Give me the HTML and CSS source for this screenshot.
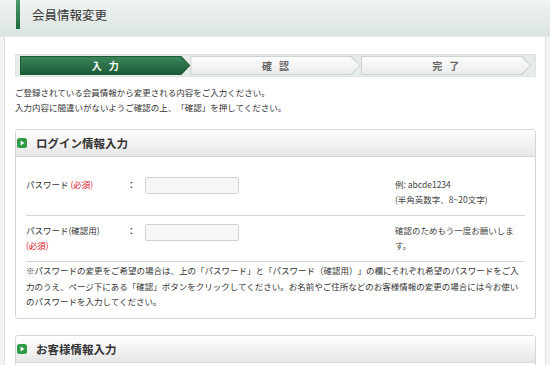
FILE: index.html
```html
<!DOCTYPE html>
<html lang="ja">
<head>
<meta charset="utf-8">
<title>会員情報変更</title>
<link rel="stylesheet" href="styles.css">
</head>
<body>
<header class="head">
  <span class="head-bar"></span>
  <h1 class="head-title">会員情報変更</h1>
</header>
<div class="page">
  <ol class="steps">
    <li class="step step-active"><span class="step-label">入力</span></li>
    <li class="step"><span class="step-label">確認</span></li>
    <li class="step"><span class="step-label">完了</span></li>
  </ol>
  <p class="intro">ご登録されている会員情報から変更される内容をご入力ください。<br>入力内容に間違いがないようご確認の上、「確認」を押してください。</p>

  <section class="box">
    <h2 class="box-head">
      <svg class="box-icon" viewBox="0 0 10 10" width="10" height="10"><rect x="0" y="0" width="10" height="10" rx="2.5" fill="#2f9a45"/><path d="M3.6 2.4 L7.4 5 L3.6 7.6 Z" fill="#fff"/></svg>
      ログイン情報入力
    </h2>
    <div class="row row-first">
      <div class="label">パスワード <span class="req">(必須)</span></div>
      <div class="colon">：</div>
      <div class="field"><span class="input"></span></div>
      <div class="note">例: abcde1234<br>(半角英数字、8~20文字)</div>
    </div>
    <div class="row row-second">
      <div class="label">パスワード(確認用)<br><span class="req">(必須)</span></div>
      <div class="colon">：</div>
      <div class="field"><span class="input input-second"></span></div>
      <div class="note">確認のためもう一度お願いします。</div>
    </div>
    <p class="box-note">※パスワードの変更をご希望の場合は、上の「パスワード」と「パスワード（確認用）」の欄にそれぞれ希望のパスワードをご入力のうえ、ページ下にある「確認」ボタンをクリックしてください。お名前やご住所などのお客様情報の変更の場合には今お使いのパスワードを入力してください。</p>
  </section>

  <section class="box">
    <h2 class="box-head">
      <svg class="box-icon" viewBox="0 0 10 10" width="10" height="10"><rect x="0" y="0" width="10" height="10" rx="2.5" fill="#2f9a45"/><path d="M3.6 2.4 L7.4 5 L3.6 7.6 Z" fill="#fff"/></svg>
      お客様情報入力
    </h2>
    <div class="box-body"></div>
  </section>
</div>
</body>
</html>
```

FILE: styles.css
```css
html, body {
  margin: 0;
  padding: 0;
}
body {
  background: #f3f4f4;
  font-family: "Noto Sans CJK JP", "Liberation Sans", sans-serif;
  color: #333;
  font-size: 8.5px;
  overflow: hidden;
  text-spacing-trim: space-all;
}
.head {
  height: 37px;
  background: linear-gradient(#f1f5f3, #dae3df);
  display: flex;
  align-items: flex-start;
  border-bottom: 1px solid #e6ebe9;
  box-sizing: border-box;
}
.head-bar {
  width: 4px;
  height: 29px;
  margin-left: 16px;
  background: linear-gradient(#4a9a68, #1f6a3f);
}
.head-title {
  margin: 0 0 0 12px;
  font-size: 12.5px;
  font-weight: normal;
  line-height: 30px;
  color: #333;
}
.page {
  margin: 0 4px;
  background: #fff;
  border-left: 1px solid #dcdcdc;
  border-right: 1px solid #dcdcdc;
  padding: 17px 9px 0 10px;
  min-height: 400px;
}
.steps {
  list-style: none;
  margin: 0;
  padding: 1px 4px;
  display: flex;
  height: 19px;
  background: #e6ede9;
  border: 1px solid #dde5e1;
}
.step {
  flex: 1;
  position: relative;
  display: flex;
  align-items: center;
  justify-content: center;
}
.step::before,
.step::after {
  content: "";
  position: absolute;
  clip-path: polygon(0 0, calc(100% - 9px) 0, 100% 50%, calc(100% - 9px) 100%, 0 100%);
}
.step::before {
  inset: 0;
  background: #cdd3d0;
}
.step::after {
  inset: 1px 1px 1px 1px;
  background: linear-gradient(#fdfdfd, #ececec);
}
.step-active::before {
  background: #1c5a36;
}
.step-active::after {
  background: linear-gradient(#3b8659, #1d5b37);
}
.step-label {
  position: relative;
  z-index: 1;
  font-size: 10px;
  font-weight: bold;
  letter-spacing: 7px;
  margin-right: -7px;
  color: #666;
}
.step-active .step-label {
  color: #fff;
}
.intro {
  margin: 8px 0 0;
  line-height: 15px;
  color: #333;
}
.box {
  margin-top: 14px;
  border: 1px solid #d6d6d6;
  border-radius: 3px;
  background: #fff;
}
.box + .box {
  margin-top: 16px;
}
.box-head {
  margin: 0;
  height: 26px;
  display: flex;
  align-items: center;
  gap: 9px;
  padding-left: 1px;
  font-size: 11.5px;
  font-weight: bold;
  color: #333;
  background: linear-gradient(#ffffff, #e6e6e6);
  border-bottom: 1px solid #d6d6d6;
  border-radius: 3px 3px 0 0;
}
.box-icon {
  flex: none;
}
.row {
  margin: 0 10px;
  display: grid;
  grid-template-columns: 101px 18px 250px 1fr;
  align-items: start;
  border-bottom: 1px solid #d4d4d4;
  line-height: 15px;
}
.row-first {
  padding: 20px 0 8px;
}
.row-second {
  padding: 7px 0 8px;
}
.req {
  color: #e2141f;
}
.colon {
  font-weight: bold;
}
.input {
  display: block;
  width: 94px;
  height: 17px;
  box-sizing: border-box;
  border: 1px solid #d2d2d2;
  border-radius: 2px;
  background: #f6f6f6;
}
.input-second {
  margin-top: 1px;
}
.note {
  color: #444;
}
.box-note {
  margin: 0 13px 0 10px;
  padding: 1px 0 8px;
  line-height: 15.5px;
  color: #333;
}
.box-body {
  height: 20px;
}
```
